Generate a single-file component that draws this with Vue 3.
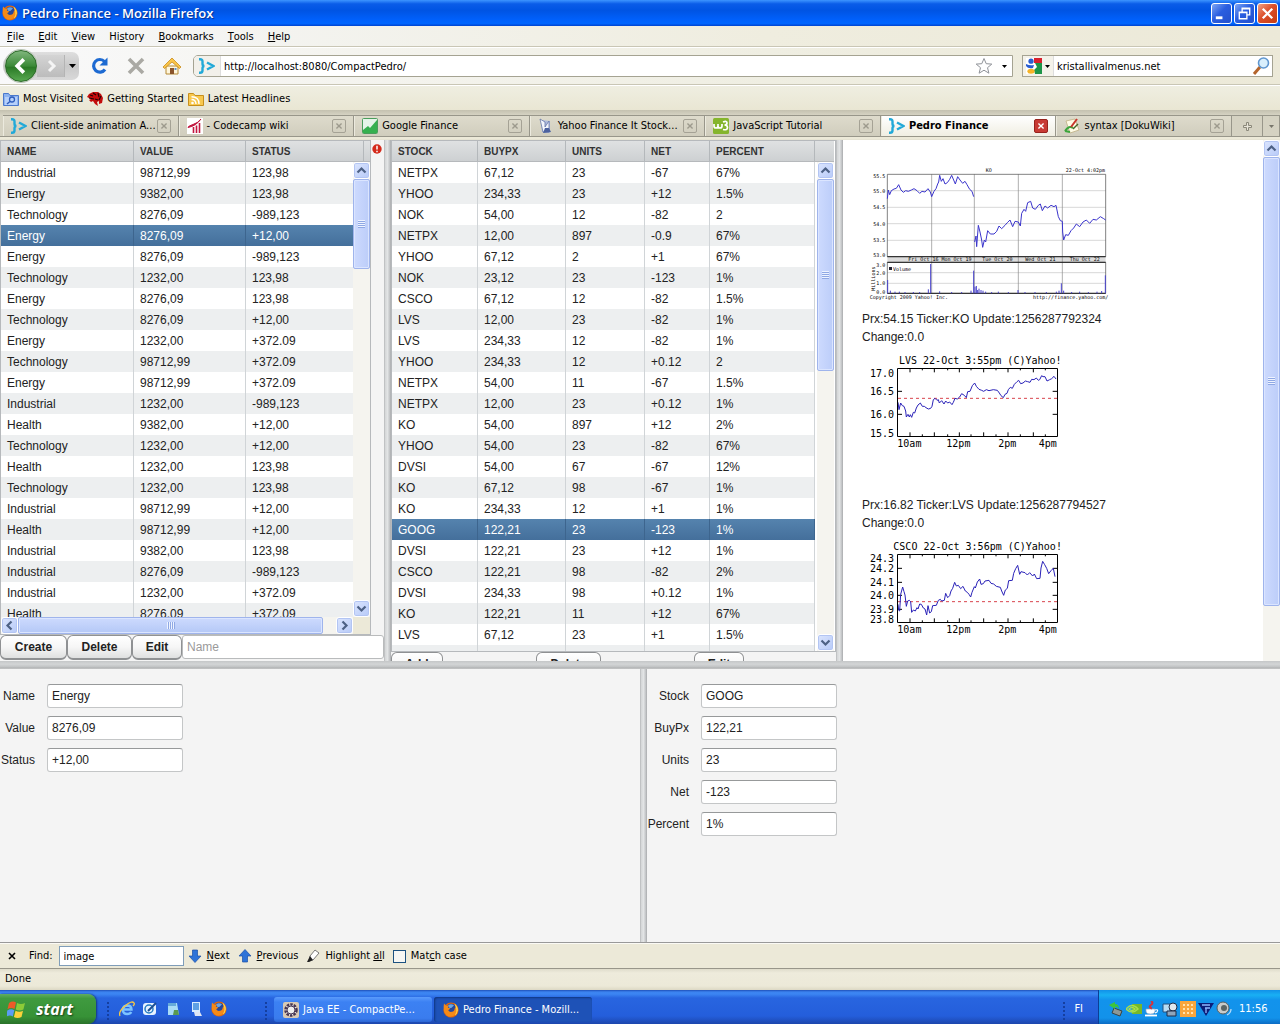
<script setup>
import { ref } from 'vue'

const menus = [['', 'F', 'ile'], ['', 'E', 'dit'], ['', 'V', 'iew'], ['Hi', 's', 'tory'], ['', 'B', 'ookmarks'], ['', 'T', 'ools'], ['', 'H', 'elp']]

const tabs = [
  { title: 'Client-side animation A...', icon: 'brace' },
  { title: '- Codecamp wiki', icon: 'camp' },
  { title: 'Google Finance', icon: 'gfin' },
  { title: 'Yahoo Finance It Stock...', icon: 'page' },
  { title: 'JavaScript Tutorial', icon: 'w3' },
  { title: 'Pedro Finance', icon: 'brace', active: true },
  { title: 'syntax [DokuWiki]', icon: 'doku' }
]

const portfolios = [
  ['Industrial', '98712,99', '123,98'],
  ['Energy', '9382,00', '123,98'],
  ['Technology', '8276,09', '-989,123'],
  ['Energy', '8276,09', '+12,00'],
  ['Energy', '8276,09', '-989,123'],
  ['Technology', '1232,00', '123,98'],
  ['Energy', '8276,09', '123,98'],
  ['Technology', '8276,09', '+12,00'],
  ['Energy', '1232,00', '+372.09'],
  ['Technology', '98712,99', '+372.09'],
  ['Energy', '98712,99', '+372.09'],
  ['Industrial', '1232,00', '-989,123'],
  ['Health', '9382,00', '+12,00'],
  ['Technology', '1232,00', '+12,00'],
  ['Health', '1232,00', '123,98'],
  ['Technology', '1232,00', '123,98'],
  ['Industrial', '98712,99', '+12,00'],
  ['Health', '98712,99', '+12,00'],
  ['Industrial', '9382,00', '123,98'],
  ['Industrial', '8276,09', '-989,123'],
  ['Industrial', '1232,00', '+372.09'],
  ['Health', '8276,09', '+372.09']
]

const stocks = [
  ['NETPX', '67,12', '23', '-67', '67%'],
  ['YHOO', '234,33', '23', '+12', '1.5%'],
  ['NOK', '54,00', '12', '-82', '2'],
  ['NETPX', '12,00', '897', '-0.9', '67%'],
  ['YHOO', '67,12', '2', '+1', '67%'],
  ['NOK', '23,12', '23', '-123', '1%'],
  ['CSCO', '67,12', '12', '-82', '1.5%'],
  ['LVS', '12,00', '23', '-82', '1%'],
  ['LVS', '234,33', '12', '-82', '1%'],
  ['YHOO', '234,33', '12', '+0.12', '2'],
  ['NETPX', '54,00', '11', '-67', '1.5%'],
  ['NETPX', '12,00', '23', '+0.12', '1%'],
  ['KO', '54,00', '897', '+12', '2%'],
  ['YHOO', '54,00', '23', '-82', '67%'],
  ['DVSI', '54,00', '67', '-67', '12%'],
  ['KO', '67,12', '98', '-67', '1%'],
  ['KO', '234,33', '12', '+1', '1%'],
  ['GOOG', '122,21', '23', '-123', '1%'],
  ['DVSI', '122,21', '23', '+12', '1%'],
  ['CSCO', '122,21', '98', '-82', '2%'],
  ['DVSI', '234,33', '98', '+0.12', '1%'],
  ['KO', '122,21', '11', '+12', '67%'],
  ['LVS', '67,12', '23', '+1', '1.5%'],
  ['', '', '', '', '']
]

const portfolioForm = ref([
  { label: 'Name', value: 'Energy' },
  { label: 'Value', value: '8276,09' },
  { label: 'Status', value: '+12,00' }
])
const stockForm = ref([
  { label: 'Stock', value: 'GOOG' },
  { label: 'BuyPx', value: '122,21' },
  { label: 'Units', value: '23' },
  { label: 'Net', value: '-123' },
  { label: 'Percent', value: '1%' }
])
const url = ref('http://localhost:8080/CompactPedro/')
const search = ref('kristallivalmenus.net')
const find = ref('image')
const newName = ref('')
const matchCase = ref(false)

const ticks = [195, 232, 268, 308, 343, 378, 416, 453, 489, 526, 565, 601]
const tickPath = ticks.map((x, i) => {
  const n = i % 2 ? 6 : 12
  return `M${x} 70v${n}M${x} 274v${-n}`
}).join('')

const dayCharts = [
  {
    title: 'LVS 22-Oct 3:55pm (C)Yahoo!',
    titleX: 162,
    labels: [['17.0', 95, 0], ['16.5', 150, 139], ['16.0', 219, 208], ['15.5', 277, 0]],
    base: 160,
    line: '159,172 162,194 167,174 172,182 177,184 182,198 184,216 189,208 193,216 196,209 200,217 205,202 209,204 214,189 219,180 226,174 232,184 238,184 243,188 250,192 257,190 261,184 265,164 270,160 276,166 280,164 283,174 290,167 297,177 302,168 308,174 314,171 321,179 325,172 330,160 337,162 344,156 350,146 358,151 364,158 368,140 375,139 382,122 389,114 394,124 402,133 410,136 416,139 424,134 432,137 445,134 457,136 463,144 468,152 475,158 480,148 486,145 490,134 496,127 502,130 508,118 516,110 521,106 527,116 534,114 541,108 548,110 555,112 560,103 567,104 574,99 580,106 584,104 590,92 594,95 600,95 606,108 614,104 620,101 627,94 633,102'
  },
  {
    title: 'CSCO 22-Oct 3:56pm (C)Yahoo!',
    titleX: 145,
    labels: [['24.3', 94, 0], ['24.2', 122, 112], ['24.1', 165, 154], ['24.0', 205, 193], ['23.9', 246, 235], ['23.8', 275, 0]],
    base: 212,
    line: '159,220 161,238 164,240 167,190 173,168 177,182 180,192 184,226 188,210 193,208 197,212 200,244 205,237 211,240 216,230 219,234 224,219 229,220 235,231 240,234 245,252 249,224 254,246 259,242 263,224 274,223 280,208 286,205 290,210 298,208 302,187 308,200 314,194 318,180 323,172 329,154 334,165 340,163 347,173 354,166 361,180 367,184 372,190 377,198 381,184 388,167 391,171 397,153 404,144 408,160 415,158 420,150 432,148 438,157 446,159 454,166 466,169 470,180 476,193 481,177 487,172 491,149 502,148 506,127 512,113 518,103 524,130 528,122 540,125 547,132 554,125 563,135 568,129 575,143 585,142 588,111 593,91 599,101 605,112 611,128 618,119 625,112 630,137'
  }
]

const koLine = '127,176 130,150 134,164 139,152 147,147 154,145 161,134 168,150 175,157 182,152 190,154 199,150 207,146 216,152 224,160 231,154 240,156 249,146 256,156 260,170 267,154 273,146 278,132 281,126 284,106 289,124 294,116 300,132 307,128 314,118 320,106 326,120 331,132 338,110 345,120 353,130 360,124 366,134 374,148 381,154 386,170'
const koLine2 = '389,306 393,288 395,320 400,256 405,276 410,300 413,322 418,300 422,306 428,272 436,282 447,282 455,274 462,258 470,266 480,256 487,248 495,240 503,260 510,244 520,246 526,258 530,220 537,208 542,214 548,188 557,184 563,204 571,208 580,196 586,192 592,212 600,198 608,204 618,196 627,200 633,196 640,230 646,242 652,244 653,276 656,300 662,284 670,286 678,272 686,264 694,252 704,260 714,246 724,240 734,250 744,238 754,240 766,230 776,236 782,240'
const volBars = [[128, 420], [136, 452], [150, 455], [163, 455], [180, 456], [205, 456], [224, 456], [250, 448], [257, 372], [284, 454], [320, 456], [350, 456], [378, 452], [386, 392], [390, 440], [394, 438], [398, 450], [402, 446], [408, 450], [414, 452], [422, 455], [440, 456], [460, 455], [490, 456], [519, 450], [540, 456], [570, 456], [604, 456], [634, 455], [642, 452], [649, 430], [656, 452], [680, 456], [704, 455], [730, 456], [756, 455], [770, 453], [781, 406]]
</script>

<template>
  <div class="screen">
    <svg class="defs" aria-hidden="true">
      <symbol id="i-fox" viewBox="0 0 16 16">
        <circle cx="8" cy="8" r="7.6" fill="#e0660c" />
        <circle cx="8.2" cy="6.8" r="5" fill="#27489c" />
        <path d="M5 3.600q3-2.600 6 0l-2 1.600q-1 1.600-3 .4z" fill="#6aa5e4" />
        <path d="M1 1.500l2.200 2.200q1.400-.6 2.600 0l-1 1.800 2.600 1-2.200 1.700q1.200 2.200 3.600 1.600 2.800-.6 3-3.600l2-2.200q1.600 5-1.200 8.200-3 3.200-7 2.400Q-.6 12.200 1 1.500z" fill="#f58a18" />
        <path d="M11.500 1.600q3.600 2.800 3.400 7-.5 3.500-3.300 5.200 2.600-3.400 1.700-6.800z" fill="#fdd449" />
      </symbol>
      <symbol id="i-brace" viewBox="0 0 16 16">
        <path d="M0 1.200h1q2.500 0 2.500 2.300v2.200q0 2.300 2 2.300-2 0-2 2.300v2.200q0 2.300-2.500 2.300H0M8 4.500L14.500 8 8 11.500" fill="none" stroke="#22a9d8" stroke-width="2.400" />
      </symbol>
      <symbol id="i-camp" viewBox="0 0 16 16">
        <path d="M0 0h16v16H0z" fill="#fff" />
        <path d="M1 9.500Q9 8 14 1 11 5 6 6.500T1 9.500z" fill="#c3163f" stroke="#c3163f" />
        <path d="M6.500 9v6M9.500 7.500V15M12.500 5v10" fill="none" stroke="#c3163f" stroke-width="1.600" />
      </symbol>
      <symbol id="i-gfin" viewBox="0 0 16 16">
        <rect x=".5" y=".5" width="15" height="15" rx="1" fill="#e4f4e8" stroke="#4a9d5c" />
        <path d="M1 12l5-4 2 2 7-8v13H1z" fill="#35b04f" />
      </symbol>
      <symbol id="i-page" viewBox="0 0 16 16">
        <path d="M3 2l9 1v12l-8-1z" fill="#aebbdc" />
        <path d="M2 1l5 3v5l4-6v11H5z" fill="#f2f5fc" stroke="#596ca0" stroke-width=".7" />
        <path d="M7 10h4l2 4-8 1z" fill="#4c629f" />
      </symbol>
      <symbol id="i-w3" viewBox="0 0 16 16">
        <rect width="16" height="16" rx="1.500" fill="#85b52d" />
        <path d="M1 6v2q0 2 2 2t2-2V6v2q0 2 2 2t2-2V6M10 4q4-1.500 4 1 0 2-2.500 2 3 0 3 2.500 0 3-4.500 2" fill="none" stroke="#fff" stroke-width="1.700" />
      </symbol>
      <symbol id="i-doku" viewBox="0 0 16 16">
        <path d="M2 3l9-2 4 11-9 3z" fill="#fffbe6" stroke="#b8a878" stroke-width=".7" />
        <path d="M1 13q4-6 8-3M1 13l5 1" stroke="#3ba53b" stroke-width="2" fill="none" />
        <path d="M13 1L7 9" stroke="#c8362c" stroke-width="2" /><path d="M14 6l-5 5" stroke="#47682c" stroke-width="1.500" />
      </symbol>
      <symbol id="i-up" viewBox="0 0 15 15">
        <path d="M3.500 9.500l4-4 4 4" fill="none" stroke="#4d6185" stroke-width="2.200" />
      </symbol>
      <symbol id="i-x" viewBox="0 0 14 14">
        <path d="M4 4l6 6M10 4l-6 6" fill="none" stroke="currentColor" stroke-width="1.600" />
      </symbol>
      <symbol id="i-caret" viewBox="0 0 7 4">
        <path d="M0 0h7L3.500 4z" fill="currentColor" />
      </symbol>
    </svg>

    <header class="titlebar">
      <svg class="i16"><use href="#i-fox" /></svg>
      <h1>Pedro Finance - Mozilla Firefox</h1>
      <button class="win" aria-label="Minimize"><svg viewBox="0 0 20 20"><path d="M4 13h7v3H4z" fill="#fff" /></svg></button>
      <button class="win" aria-label="Restore"><svg viewBox="0 0 20 20"><path d="M7.500 8V4.500h8v7H13M4.500 8.500h8v7h-8zM4 9h9M7 5h9" fill="none" stroke="#fff" stroke-width="1.400" /></svg></button>
      <button class="win close" aria-label="Close"><svg viewBox="0 0 20 20"><path d="M5 5l10 10M15 5L5 15" stroke="#fff" stroke-width="2.400" /></svg></button>
    </header>

    <nav class="menubar">
      <button v-for="m in menus" :key="m[2]">{{ m[0] }}<u>{{ m[1] }}</u>{{ m[2] }}</button>
    </nav>

    <div class="navbar">
      <div class="history">
        <button class="back" aria-label="Back"><svg viewBox="0 0 32 32"><path d="M19 9l-7 7 7 7" fill="none" stroke="#fff" stroke-width="4" /></svg></button>
        <button class="forward" aria-label="Forward"><svg viewBox="0 0 24 20"><path d="M10 5l5 5-5 5" fill="none" stroke="#f4f4f4" stroke-width="3" /></svg></button>
        <button class="recent" aria-label="Recent pages"><svg class="caret"><use href="#i-caret" /></svg></button>
      </div>
      <button class="tool" aria-label="Reload"><svg viewBox="0 0 20 20"><path d="M15 13.500A6.300 6.300 0 1 1 14.500 5.500" fill="none" stroke="#1d6ad2" stroke-width="3.200" /><path d="M17.500 1.500v8h-8z" fill="#1d6ad2" /></svg></button>
      <button class="tool" aria-label="Stop"><svg viewBox="0 0 20 20"><path d="M3 3l14 14M17 3L3 17" stroke="#aaa9a4" stroke-width="3.600" /></svg></button>
      <button class="tool" aria-label="Home"><svg viewBox="0 0 20 20"><path d="M4 10h12v8H4z" fill="#fff6dc" stroke="#b58a35" /><path d="M1 11l9-9 9 9-1.500 1.500L10 6l-7.500 6.500z" fill="#f9c548" stroke="#c88a1c" stroke-width=".8" /><path d="M8 12h4v6H8z" fill="#8a542a" /><path d="M12.500 12h2v2h-2z" fill="#5f91c8" /></svg></button>
      <div class="field urlbar">
        <span class="site"><svg class="i16"><use href="#i-brace" /></svg></span>
        <input v-model="url" aria-label="Location" />
        <svg class="star" viewBox="0 0 18 18"><path d="M9 1.500l2.200 5.200 5.600.4-4.300 3.600 1.400 5.500L9 13.200l-4.900 3 1.400-5.500L1.200 7.100l5.600-.4z" fill="#fff" stroke="#8f9298" /></svg>
        <svg class="caret small"><use href="#i-caret" /></svg>
      </div>
      <div class="field searchbar">
        <span class="engine">
          <svg class="i16" viewBox="0 0 16 16"><path d="M0 0h16v16H0z" fill="#fff" /><path d="M8 0h8v5H8z" fill="#d8202c" /><path d="M16 5v11H9l-1-4 3-3-2-4z" fill="#1d9548" /><circle cx="5" cy="3.200" r="2.600" fill="#2a5ed0" /><path d="M0 6q4 2 8 1l-1 3q-5 1-7-2z" fill="#2a5ed0" /><ellipse cx="5" cy="13.200" rx="3.600" ry="2.500" fill="#f6b325" /></svg>
          <svg class="caret small"><use href="#i-caret" /></svg>
        </span>
        <input v-model="search" aria-label="Search" />
        <svg class="lens" viewBox="0 0 18 18"><path d="M8 10l-6 7" stroke="#b4642c" stroke-width="3" /><circle cx="11.500" cy="6" r="5" fill="#d9effc" stroke="#5f96cf" stroke-width="1.600" /></svg>
      </div>
    </div>

    <nav class="bookmarks">
      <a href="#"><svg class="i16" viewBox="0 0 16 16"><path d="M.5 2.500h5l1.500 2h8.500v10H.5z" fill="#8db3f0" stroke="#4a78cc" /><path d="M2 6h12v8H2z" fill="#b5d0fa" /><circle cx="9" cy="8.500" r="2.500" fill="none" stroke="#2f5ebd" stroke-width="1.300" /><path d="M7 10.500L4 13" stroke="#2f5ebd" stroke-width="1.500" /></svg>Most Visited</a>
      <a href="#"><svg class="i16" viewBox="0 0 16 16"><path d="M0 6l2-3 4-2 5 0 3 2 2 4-1 5-3 1 0-3-2 1 1 4-3-2-2-3-2 1-2-2 2-1z" fill="#c40d0d" /><path d="M3 4l3 1M6 2l3 2M11 2l1 4M2 7l5 1M8 8l3 1M14 5l-2 4" stroke="#230505" stroke-width="1.200" /></svg>Getting Started</a>
      <a href="#"><svg class="i16" viewBox="0 0 16 16"><path d="M.5 2.500h5l1.500 2h8.500v10H.5z" fill="#f8c84e" stroke="#c68f1d" /><circle cx="4.500" cy="12" r="1.300" fill="#fff" /><path d="M3.500 8.500q4.500 0 4.500 4.500M3.500 5.700q7.500 0 7.500 7.300" fill="none" stroke="#fff" stroke-width="1.400" /></svg>Latest Headlines</a>
    </nav>

    <div class="tabstrip">
      <div v-for="t in tabs" :key="t.title" class="tab" :class="{ active: t.active }">
        <svg class="i16"><use :href="'#i-' + t.icon" /></svg>
        <span>{{ t.title }}</span>
        <button class="tabclose" :aria-label="'Close ' + t.title"><svg><use href="#i-x" /></svg></button>
      </div>
      <button class="tabextra plus" aria-label="New tab"><svg viewBox="0 0 9 9"><path d="M3.500.5h2v3h3v2h-3v3h-2v-3h-3v-2h3z" fill="#e8e5d8" stroke="#8b887a" /></svg></button>
      <button class="tabextra" aria-label="List all tabs"><svg class="caret small grey"><use href="#i-caret" /></svg></button>
    </div>

    <main class="content">
      <div class="upper">
        <section class="pane left">
          <div class="grid portfolio">
            <div class="gridrow">
              <div class="viewport">
                <table>
                  <colgroup><col class="c-name" /><col class="c-value" /><col /></colgroup>
                  <thead><tr><th>NAME</th><th>VALUE</th><th>STATUS</th></tr></thead>
                  <tbody>
                    <tr v-for="(r, i) in portfolios" :key="i" :class="{ selected: i === 3 }"><td v-for="(c, j) in r" :key="j">{{ c }}</td></tr>
                  </tbody>
                </table>
              </div>
              <div class="side">
                <div class="cap"><i></i></div>
                <div class="vbar">
                  <button class="arrow" aria-label="Scroll up"><svg><use href="#i-up" /></svg></button>
                  <div class="thumb" :style="{ flexGrow: 21 }"></div>
                  <div class="rest" :style="{ flexGrow: 79 }"></div>
                  <button class="arrow down" aria-label="Scroll down"><svg><use href="#i-up" /></svg></button>
                </div>
              </div>
            </div>
            <div class="hwrap">
              <div class="hbar">
                <button class="arrow west" aria-label="Scroll left"><svg><use href="#i-up" /></svg></button>
                <div class="thumb" :style="{ flexGrow: 96 }"></div>
                <div class="rest" :style="{ flexGrow: 4 }"></div>
                <button class="arrow east" aria-label="Scroll right"><svg><use href="#i-up" /></svg></button>
              </div>
              <div class="corner"></div>
            </div>
          </div>
          <svg class="error" viewBox="0 0 10 10"><circle cx="5" cy="5" r="4.700" fill="#d42a1c" /><path d="M5 1.800v3.700M5 6.800v1.400" stroke="#fff" stroke-width="1.500" /></svg>
          <div class="actions">
            <button class="btn create">Create</button>
            <button class="btn delete">Delete</button>
            <button class="btn edit">Edit</button>
            <input v-model="newName" placeholder="Name" aria-label="Name" />
          </div>
        </section>

        <div class="vsplit"></div>

        <section class="pane middle">
          <div class="grid stocks">
            <div class="gridrow">
              <div class="viewport">
                <table>
                  <colgroup><col class="c-stock" /><col class="c-buy" /><col class="c-units" /><col class="c-net" /><col /></colgroup>
                  <thead><tr><th>STOCK</th><th>BUYPX</th><th>UNITS</th><th>NET</th><th>PERCENT</th></tr></thead>
                  <tbody>
                    <tr v-for="(r, i) in stocks" :key="i" :class="{ selected: i === 17 }"><td v-for="(c, j) in r" :key="j">{{ c }}</td></tr>
                  </tbody>
                </table>
              </div>
              <div class="side">
                <div class="cap"></div>
                <div class="vbar">
                  <button class="arrow" aria-label="Scroll up"><svg><use href="#i-up" /></svg></button>
                  <div class="thumb" :style="{ flexGrow: 42 }"></div>
                  <div class="rest" :style="{ flexGrow: 58 }"></div>
                  <button class="arrow down" aria-label="Scroll down"><svg><use href="#i-up" /></svg></button>
                </div>
              </div>
            </div>
          </div>
          <div class="cutoff">
            <div><button class="btn add">Add</button></div>
            <div><button class="btn delete">Delete</button></div>
            <div><button class="btn edit">Edit</button></div>
          </div>
        </section>

        <div class="vsplit"></div>

        <section class="pane quotes">
          <div class="feed">
            <svg class="wide" viewBox="51 60 768 450" role="img" aria-label="KO five day chart">
              <path d="M127 351h655v15H127z" fill="#dcdcdc" />
              <path d="M127 152h655M127 202h655M127 251h655M127 301h655M127 398h655M127 430h655" stroke="#c4c4c4" stroke-width="2" />
              <path d="M260 103v357M388 103v357M520 103v357M652 103v357" stroke="#888" stroke-width="2" />
              <path d="M127 103h655v247H127zM127 367h655v93H127z" fill="none" stroke="#444" stroke-width="2" />
              <path d="M127 350h655M127 367h655M127 460h655" stroke="#222" stroke-width="3" />
              <polyline :points="koLine" fill="none" stroke="#3a34cc" stroke-width="3" />
              <polyline :points="koLine2" fill="none" stroke="#3a34cc" stroke-width="3" />
              <path v-for="b in volBars" :key="b[0]" :d="`M${b[0]} ${b[1]}V460`" stroke="#4640cc" stroke-width="3" />
              <path d="M132 381h9v9h-9z" fill="#223" />
              <g class="tiny">
                <text x="422" y="96">KO</text><text x="780" y="96" class="end">22-Oct 4:02pm</text>
                <g class="end">
                  <text x="121" y="114">55.5</text><text x="121" y="158">55.0</text><text x="121" y="208">54.5</text><text x="121" y="257">54.0</text><text x="121" y="307">53.5</text><text x="121" y="351">53.0</text>
                  <text x="121" y="380">3.0</text><text x="121" y="404">2.0</text><text x="121" y="436">1.0</text><text x="121" y="461">0.0</text>
                </g>
                <text x="190" y="364">Fri Oct 16 Mon Oct 19</text><text x="412" y="364">Tue Oct 20</text><text x="541" y="364">Wed Oct 21</text><text x="674" y="364">Thu Oct 22</text>
                <text x="144" y="392">Volume</text><text x="74" y="476">Copyright 2009 Yahoo! Inc.</text><text x="790" y="476" class="end">http://finance.yahoo.com/</text>
                <text transform="translate(89 452) rotate(-90)">Millions</text>
              </g>
            </svg>
            <p>Prx:54.15 Ticker:KO Update:1256287792324<br />Change:0.0</p>
            <template v-for="(c, k) in dayCharts" :key="c.title">
              <svg class="day" viewBox="51 3 618 450" role="img" :aria-label="c.title">
                <path :d="tickPath" stroke="#000" stroke-width="3" />
                <g v-for="l in c.labels" :key="l[0]">
                  <text x="147" :y="l[1]" class="end">{{ l[0] }}</text>
                  <path v-if="l[2]" :d="`M157 ${l[2]}h14M637 ${l[2]}h-14`" stroke="#000" stroke-width="3" />
                </g>
                <path :d="`M159 ${c.base}H636`" stroke="#d8444c" stroke-width="3" stroke-dasharray="9 9" />
                <polyline :points="c.line" fill="none" stroke="#2a22b8" stroke-width="3" />
                <path d="M157.500 70.500h480v204h-480z" fill="none" stroke="#000" stroke-width="3" />
                <text :x="c.titleX" y="56">{{ c.title }}</text>
                <text x="157" y="306">10am</text><text x="304" y="306">12pm</text><text x="460" y="306">2pm</text><text x="581" y="306">4pm</text>
              </svg>
              <p v-if="k === 0">Prx:16.82 Ticker:LVS Update:1256287794527<br />Change:0.0</p>
            </template>
          </div>
          <div class="vbar">
            <button class="arrow" aria-label="Scroll up"><svg><use href="#i-up" /></svg></button>
            <div class="thumb" :style="{ flexGrow: 89 }"></div>
            <div class="rest" :style="{ flexGrow: 11 }"></div>
          </div>
        </section>
      </div>

      <div class="hsplit"></div>

      <div class="lower">
        <form class="form portfolio-form" @submit.prevent>
          <template v-for="f in portfolioForm" :key="f.label">
            <label :for="'p-' + f.label">{{ f.label }}</label>
            <input :id="'p-' + f.label" v-model="f.value" />
          </template>
        </form>
        <div class="vsplit"></div>
        <form class="form stock-form" @submit.prevent>
          <template v-for="f in stockForm" :key="f.label">
            <label :for="'s-' + f.label">{{ f.label }}</label>
            <input :id="'s-' + f.label" v-model="f.value" />
          </template>
        </form>
      </div>
    </main>

    <div class="findbar">
      <button class="findclose" aria-label="Close find bar"><svg class="i14"><use href="#i-x" /></svg></button>
      <label for="find">Find:</label>
      <input id="find" v-model="find" />
      <button><svg class="i14" viewBox="0 0 14 14"><path d="M4.500 1h5v6H13l-6 6.500L1 7h3.500z" fill="#2f74d8" stroke="#1a4fa8" stroke-width=".7" /></svg><span><u>N</u>ext</span></button>
      <button><svg class="i14" viewBox="0 0 14 14"><path d="M4.500 13h5V7H13L7 .5 1 7h3.500z" fill="#2f74d8" stroke="#1a4fa8" stroke-width=".7" /></svg><span><u>P</u>revious</span></button>
      <button><svg class="i14" viewBox="0 0 14 14"><path d="M9 1l4 3-6 7-4 1 1-5z" fill="#fff" stroke="#777" /><path d="M4 7l3 4-4 2-2 0z" fill="#222" /></svg><span>Highlight <u>al</u>l</span></button>
      <label class="check"><input v-model="matchCase" type="checkbox" /><span>Mat<u>c</u>h case</span></label>
    </div>
    <footer class="status">Done</footer>

    <div class="taskbar">
      <button class="start">
        <svg viewBox="0 0 20 18"><path d="M2 3q4-2.500 7-.5L7.500 9q-3.500-2-7 .3z" fill="#ee5a28" /><path d="M10 3q4 2 8 0l-1.600 6.500q-4 2-7.600 0z" fill="#8ccb38" /><path d="M.3 10.500q3.500-2.300 7-.3L5.800 16.500q-3-2-6.800.3z" fill="#5a9cf4" /><path d="M8.500 10.700q4 2 7.500 0L14.500 17q-4 2-7.600 0z" fill="#fbd23a" /></svg>
        start
      </button>
      <i class="grip first"></i>
      <div class="quick">
        <button aria-label="Internet Explorer"><svg class="i16" viewBox="0 0 16 16"><path d="M3.500 8.500h9q0-4-4.300-4-4.200.2-4.500 4.500.5 4 4.500 4 3 0 4-2" fill="none" stroke="#7cc4ff" stroke-width="2.400" /><path d="M1 15Q-1 11 6 5t9-3q1 1-1 3" fill="none" stroke="#f6c845" stroke-width="1.300" /></svg></button>
        <button aria-label="Desktop"><svg class="i16" viewBox="0 0 16 16"><rect x="1" y="2" width="13" height="12" rx="3" fill="#e8f3ff" /><circle cx="7" cy="8" r="4" fill="none" stroke="#267dc4" stroke-width="1.500" /><path d="M6 10l8-8" stroke="#1c4f94" stroke-width="2" /></svg></button>
        <button aria-label="Notes"><svg class="i16" viewBox="0 0 16 16"><path d="M3 2h9l2 12H3z" fill="#a9dcf6" /><path d="M3 2h8v3H3z" fill="#65aada" /><path d="M9 9h4l1 5H8z" fill="#5a9950" /></svg></button>
        <button aria-label="Computer"><svg class="i16" viewBox="0 0 16 16"><path d="M4 1h8v10H4z" fill="#d9ecff" /><path d="M5 2h6v7H5z" fill="#5ea0e4" /><path d="M6 11h6l2 4H7z" fill="#dfe6f4" /></svg></button>
        <button aria-label="Firefox"><svg class="i16"><use href="#i-fox" /></svg></button>
      </div>
      <i class="grip"></i>
      <button class="task"><svg class="i16" viewBox="0 0 16 16"><rect width="16" height="16" rx="2" fill="#d8c9b4" /><circle cx="8" cy="8" r="5.500" fill="#fff" stroke="#453553" stroke-width="2.500" stroke-dasharray="2.500 1" /><circle cx="8" cy="8" r="4" fill="#eee" stroke="#453553" /></svg>Java EE - CompactPe...</button>
      <button class="task pressed"><svg class="i16"><use href="#i-fox" /></svg>Pedro Finance - Mozill...</button>
      <i class="grip last"></i>
      <span class="lang">FI</span>
      <div class="tray">
        <svg class="i16" viewBox="0 0 16 16"><path d="M6 7l8 3-2 5-8-3z" fill="#8c9896" stroke="#394443" /><path d="M1 4l6-3v2q4 0 4 5-2-3-4-2v2z" fill="#3ec43a" /></svg>
        <svg class="i16" viewBox="0 0 16 16"><path d="M6 3h10v10H6z" fill="#76b82a" /><path d="M0 8q6-7 12 0-6 6-12 0zM3 8q3-3 6 0-3 3-6 0z" fill="none" stroke="#a9df4e" stroke-width="1.400" /></svg>
        <svg class="i16" viewBox="0 0 16 16"><path d="M2 8h9v2q0 3-4.500 3T2 10z" fill="#fff" stroke="#8ea4c4" stroke-width=".7" /><path d="M1 14.500h12" stroke="#fff" stroke-width="1.800" /><path d="M11 9q4-1 2 2l-2 1" fill="none" stroke="#fff" stroke-width="1.200" /><path d="M7 0q3 2 0 4t1 3.500" fill="none" stroke="#d8313a" stroke-width="2" /></svg>
        <svg class="i16" viewBox="0 0 16 16"><path d="M1 3h7v8H1z" fill="#b9dcf4" stroke="#24507e" /><circle cx="11" cy="6" r="4" fill="#dfe7ee" stroke="#1f2d48" /><path d="M5 10h9v5H5z" fill="#8fa5bb" stroke="#1f2d48" /></svg>
        <svg class="i16" viewBox="0 0 16 16"><path d="M0 0h16v16H0z" fill="#f9a63c" /><path d="M3 4h10M3 8h10M3 12h10" stroke="#ffe2ae" stroke-width="2" stroke-dasharray="2 2" /></svg>
        <svg class="i16" viewBox="0 0 16 16"><path d="M0 2h16l-8 13z" fill="#0c1c78" /><path d="M4 4h8M7 7h5M8 7v5" stroke="#8fb6ff" stroke-width="1.300" /></svg>
        <svg class="i16" viewBox="0 0 16 16"><circle cx="7" cy="7" r="6" fill="#c9cbc9" stroke="#59605f" /><circle cx="8" cy="7" r="3" fill="#5b6463" /><path d="M11 14q4-2 4-6" fill="none" stroke="#b5dcfa" stroke-width="1.300" /></svg>
        <time>11:56</time>
      </div>
    </div>
  </div>
</template>

<style>
body { margin: 0; }
</style>

<style scoped>
.screen { display: flex; flex-direction: column; height: 100vh; overflow: hidden; background: #ece9d8; color: #000; font: 11px/14px "DejaVu Sans Condensed", "DejaVu Sans", sans-serif; }
.screen * { box-sizing: border-box; }
.defs { position: absolute; width: 0; height: 0; }
button { display: flex; align-items: center; justify-content: center; margin: 0; padding: 0; border: 0; background: none; color: inherit; font: inherit; white-space: pre; flex: none; }
input { min-width: 0; margin: 0; font: inherit; color: inherit; outline: 0; }
svg { display: block; flex: none; }
.i16 { width: 16px; height: 16px; }
.i14 { width: 14px; height: 14px; }
.caret { width: 7px; height: 4px; }
.caret.small { width: 5px; height: 3px; }
.grey { color: #77756a; }

.titlebar { display: flex; align-items: center; flex: none; height: 26px; padding: 0 2px 0 2px; gap: 2px; background: linear-gradient(#3d95ff, #0a5ce8 15%, #0054e3 40%, #0060fb 75%, #0066ff 90%, #0043cf); }
.titlebar h1 { flex: 1; margin: 0 0 0 2px; color: #fff; font: 600 13px/18px "Open Sans", sans-serif; text-shadow: 1px 1px 1px #0a2f8c; }
.win { width: 21px; height: 21px; border: 1px solid #fff; border-radius: 3px; background: linear-gradient(135deg, #7ea6f4, #2a5ee0 45%, #2450cc); }
.win.close { background: linear-gradient(135deg, #f0a184, #dc4f2a 45%, #c43c12); }
.win svg { width: 19px; height: 19px; }

.menubar { display: flex; flex: none; height: 21px; padding: 1px 7px 0; gap: 14px; background: linear-gradient(90deg, #f6f7f9, #efeddf 60%, #ece9d8); border-bottom: 1px solid #c9c6b5; }
.navbar { display: flex; align-items: center; flex: none; height: 38px; padding: 0 7px 0 3px; background: linear-gradient(90deg, #f9f9fa, #efeee2 60%, #ece9d8); border-top: 1px solid #fff; border-bottom: 1px solid #c9c6b5; }
.history { display: flex; align-items: center; width: 76px; height: 28px; margin-right: 10px; border-radius: 14px 7px 7px 14px; background: linear-gradient(#dedede, #c9c9c9 50%, #d9d9d9); }
.back { width: 32px; height: 32px; margin-left: 2px; border: 1px solid #2b6a28; border-radius: 50%; background: linear-gradient(#7fb67c, #3c8a38 50%, #2b7a26 55%, #58a850); box-shadow: 0 0 0 1px #b9c5b6; }
.back svg { width: 30px; height: 30px; }
.forward { width: 28px; height: 22px; border-right: 1px solid #b4b4b4; background: linear-gradient(#d4d4d4, #bcbcbc); }
.forward svg { width: 24px; height: 20px; }
.recent { flex: 1; }
.tool { width: 22px; height: 22px; margin-right: 14px; }
.tool svg { width: 20px; height: 20px; }
.field { display: flex; align-items: center; height: 22px; border: 1px solid #a5a392; background: #fff; }
.field input { flex: 1; height: 18px; border: 0; padding: 0; background: none; }
.urlbar { flex: 1; margin-right: 9px; padding-right: 5px; border-radius: 5px 0 0 5px; margin-left: -4px; }
.site { display: flex; align-items: center; justify-content: center; width: 27px; height: 20px; margin-right: 3px; border-radius: 4px 0 0 4px; background: #f2f0ea; border-right: 1px solid #ddd; }
.star { width: 18px; height: 18px; margin-right: 9px; }
.searchbar { width: 251px; padding-right: 2px; }
.engine { display: flex; align-items: center; gap: 3px; height: 20px; padding: 0 3px; margin-right: 3px; background: #f4f2ea; border-right: 1px solid #ddd; }
.lens { width: 18px; height: 18px; }

.bookmarks { display: flex; align-items: center; flex: none; height: 25px; padding: 2px 3px 0; gap: 4px; background: linear-gradient(#efeee1, #e9e6d3); border-top: 1px solid #fff; }
.bookmarks a { display: flex; align-items: center; gap: 4px; color: inherit; text-decoration: none; white-space: nowrap; }

.tabstrip { display: flex; flex: none; height: 30px; padding: 5px 0 3px 3px; border-bottom: 1px solid #e6e3d3; background: linear-gradient(#c4c1b0, #d5d2c2 5px, #d5d2c2 26px, #98968a 26px, #98968a 27px, #ece9d8 27px); }
.tab { display: flex; align-items: center; flex: 1 1 0; min-width: 0; padding: 0 7px 0 8px; gap: 4px; border: 1px solid #98968a; border-width: 1px 1px 0 0; background: linear-gradient(#dedbcc, #d0cdbd); box-shadow: inset 1px 0 #eceade; }
.tab span { flex: 1; min-width: 0; white-space: nowrap; }
.tab.active { font-weight: bold; background: linear-gradient(#fff, #f0eee2); }
.tabclose { width: 14px; height: 14px; border: 1px solid #a5a295; border-radius: 2px; color: #9d9a8d; }
.tabclose svg { width: 12px; height: 12px; }
.active .tabclose { border-color: #97221d; background: #c83a34; color: #fff; }
.tabextra { width: 31px; border: 1px solid #98968a; border-width: 1px 1px 0 0; }
.tabextra + .tabextra { width: 17px; }
.plus svg { width: 9px; height: 9px; }

.content { display: flex; flex-direction: column; flex: 1; min-height: 0; color: #222; font: 12px/18px "Liberation Sans", Arial, sans-serif; background: #f4f4f4; }
.upper { display: flex; flex: 521 1 0; min-height: 0; }
.lower { display: flex; flex: 273 1 0; min-height: 0; border-bottom: 1px solid #999; }
.pane { display: flex; overflow: hidden; min-width: 0; }
.left { display: grid; flex: 0 0 30%; grid-template-columns: 1fr 13px; grid-template-rows: 1fr 26px; }
.middle { flex: 445 1 0; flex-direction: column; }
.quotes { flex: 437 1 0; background: #fff; }
.vsplit { flex: none; width: 7px; background: linear-gradient(90deg, #b4b6b8, #d6d8d9 20%, #e2e4e5 50%, #c4c6c8 80%, #a9abad); }
.hsplit { flex: none; height: 8px; background: linear-gradient(#c5c7c8, #d3d5d6 40%, #bdbfc0 80%, #999b9c 88%, #e8e8e8); }

.grid { display: flex; flex-direction: column; min-height: 0; min-width: 0; border: 1px solid #b6b9bc; background: #fff; }
.stocks { flex: 1; }
.gridrow { display: flex; flex: 1; min-height: 0; }
.viewport { flex: 1; min-width: 0; overflow: hidden; }
table { width: 100%; border-collapse: separate; border-spacing: 0; table-layout: fixed; }
.c-name { width: 133px; }
.c-value { width: 112px; }
.c-stock { width: 86px; }
.c-buy { width: 88px; }
.c-units { width: 79px; }
.c-net { width: 65px; }
th, td { height: 21px; padding: 0 6px; text-align: left; white-space: nowrap; border-right: 1px solid #d0d4d7; }
th { padding-top: 1px; font-size: 10px; line-height: 18px; color: #333; background: linear-gradient(#dfe1e2, #cdd0d2); border-right-color: #b4b8bb; border-bottom: 1px solid #b6b9bc; }
td { line-height: 20px; }
.portfolio th:last-child, .portfolio td:last-child { border-right: 0; }
tbody tr:nth-child(even) td { background: #edeff0; }
tbody tr.selected td { color: #fff; background: linear-gradient(#5583ae, #446f9b); border-right-color: #3d658e; }
.side { display: flex; flex-direction: column; flex: none; width: 17px; }
.stocks .side { width: 20px; padding-right: 1px; }
.stocks .vbar { align-self: flex-end; }
.cap { flex: none; height: 21px; background: linear-gradient(#dfe1e2, #cdd0d2); border-bottom: 1px solid #b6b9bc; }
.cap i { display: block; width: 1px; height: 20px; margin-left: 10px; background: #b4b8bb; }

.vbar { display: flex; flex-direction: column; flex: 1; width: 17px; background: #f5f4ef; }
.quotes .vbar { flex: none; }
.arrow { width: 17px; height: 17px; border: 1px solid #fff; border-radius: 3px; background: linear-gradient(135deg, #dbe5fe, #b7caf8); box-shadow: inset 0 0 0 1px #b3c5f3; }
.arrow svg { width: 15px; height: 15px; }
.down svg { transform: rotate(180deg); }
.west svg { transform: rotate(-90deg); }
.east svg { transform: rotate(90deg); }
.thumb { display: flex; align-items: center; justify-content: center; flex: 1 1 0; border: 1px solid #9fb4ec; border-radius: 2px; background: linear-gradient(90deg, #cddafe, #bccdf9); box-shadow: inset 0 0 0 1px #dbe5ff; }
.thumb::after { content: ""; width: 7px; height: 8px; background: repeating-linear-gradient(#eef3ff 0 1px, #8fa8e4 1px 2px); }
.rest { flex: 1 1 0; }
.hwrap { display: flex; flex: none; height: 17px; }
.hbar { display: flex; flex: 1; background: #f5f4ef; }
.hbar .thumb { background: linear-gradient(#cddafe, #b4c8f6); }
.hbar .thumb::after { width: 8px; height: 7px; background: repeating-linear-gradient(90deg, #eef3ff 0 1px, #8fa8e4 1px 2px); }
.corner { width: 17px; background: #ece9d8; }

.error { width: 10px; height: 10px; margin: 4px 0 0 1px; }
.actions { grid-column: 1 / 3; display: flex; align-items: flex-start; }
.btn { height: 25px; border: 1px solid #8f9193; border-bottom-width: 2px; border-radius: 6px; background: linear-gradient(#fff, #f6f6f6 50%, #dfe0e0); font-weight: bold; font-size: 12px; line-height: 18px; color: #222; }
.create { width: 67px; }
.delete { width: 65px; }
.edit { width: 50px; }
.add { width: 52px; }
.actions input { flex: 1; height: 24px; padding: 0 4px; border: 1px solid #b9bbbc; border-radius: 3px; background: #fff; }
.actions input::placeholder { color: #9a9a9a; }
.cutoff { display: grid; grid-template-columns: 145fr 158fr 142fr; flex: none; height: 9px; overflow: hidden; }

.feed { flex: 1; min-width: 0; height: 100%; padding: 20px 0 0 19px; overflow: hidden; }
.feed p { margin: 0; }
.wide { width: 256px; height: 150px; }
.day { width: 206px; height: 150px; }
.day text { font: 30px "DejaVu Sans Mono", monospace; fill: #000; }
.tiny text { font: 15px "DejaVu Sans Mono", monospace; fill: #000; }
.feed .end, .feed .end text { text-anchor: end; }

.form { display: grid; align-content: start; gap: 8px 12px; padding-top: 15px; line-height: 24px; }
.portfolio-form { flex: 0 0 50%; grid-template-columns: 35px 136px; }
.stock-form { flex: 1; grid-template-columns: 42px 136px; }
.form label { text-align: right; white-space: nowrap; }
.form input { height: 24px; padding: 0 4px; border: 1px solid #c4c6c7; border-top-color: #97999a; border-radius: 3px; background: #fff; }

.findbar { display: flex; align-items: center; flex: none; height: 26px; padding: 0 5px; gap: 8px; background: #ece9d8; border-top: 1px solid #fbfaf5; border-bottom: 1px solid #98968a; }
.findbar button, .check { display: flex; align-items: center; gap: 5px; }
.findclose { margin-right: 2px; }
.findbar #find { width: 125px; height: 20px; margin: 0 -4px 0 -2px; padding: 0 4px; border: 1px solid #7f9db9; background: #fff; }
.check input { appearance: none; width: 13px; height: 13px; border: 1px solid #1c5180; background: #f6f6f3; }
.status { flex: none; height: 21px; padding: 3px 5px; background: linear-gradient(#dfdccb, #eeebdc 4px, #ece9d8 17px, #dcd8c4); }

.taskbar { display: flex; align-items: stretch; flex: none; height: 34px; color: #fff; background: linear-gradient(#1f50b8, #3b83f0 2px, #3c86f3 4px, #2865e0 8px, #245edb 26px, #1c46ac); }
.start { width: 96px; gap: 5px; margin-top: 4px; padding-right: 12px; border-radius: 0 8px 8px 0; background: linear-gradient(#62ac60, #3f9a3f 15%, #379237 75%, #2a722a); box-shadow: 1px 0 2px #12377e; font: italic bold 16px/20px "Open Sans", sans-serif; text-shadow: 1px 1px 2px #163d16; }
.start svg { width: 20px; height: 18px; }
.grip { flex: none; width: 4px; margin: 11px 0 4px 46px; background: radial-gradient(circle, #153f9f 1px, transparent 1px) 0 0 / 4px 4px; }
.grip.first { margin-left: 10px; }
.grip.last { margin-left: auto; }
.quick { display: flex; gap: 7px; padding: 4px 0 0 9px; margin-right: -9px; }
.task { justify-content: flex-start; gap: 4px; width: 158px; height: 25px; margin: 7px 0 0 6px; padding: 0 9px; border-radius: 3px; background: linear-gradient(#5a9bfc, #3c81f3 20%, #3a7cee 85%, #2c66d4); }
.task + .task { margin-left: 2px; }
.task.pressed { background: #1e52b7; box-shadow: inset 1px 1px 2px #0f3680; }
.lang { margin: 12px 15px 0 8px; }
.tray { display: flex; align-items: center; width: 182px; padding: 3px 0 0 9px; gap: 2px; background: linear-gradient(#1290e8, #19b0f4 5px, #1293ec 10px, #1292ea 28px, #0c6cc4); border-left: 1px solid #0b3f96; }
.tray time { margin-left: 5px; }
</style>
